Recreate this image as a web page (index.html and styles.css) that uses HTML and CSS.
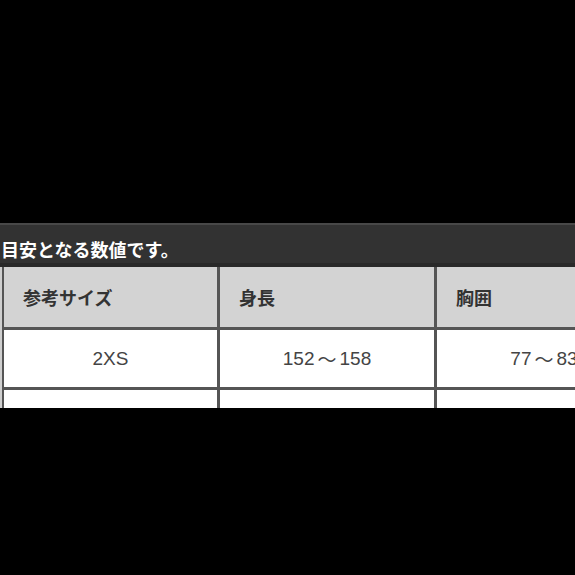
FILE: index.html
```html
<!DOCTYPE html>
<html lang="ja">
<head>
<meta charset="utf-8">
<title>サイズ表</title>
<link rel="stylesheet" href="styles.css">
</head>
<body>
<div class="page">
  <div class="top-space"></div>
  <div class="band">目安となる数値です。</div>
  <div class="table-wrap">
    <div class="grid">
      <div class="cell head">参考サイズ</div>
      <div class="cell head">身長</div>
      <div class="cell head">胸囲</div>
      <div class="cell data">2XS</div>
      <div class="cell data">152<span class="tilde">～</span>158</div>
      <div class="cell data">77<span class="tilde">～</span>83</div>
      <div class="cell data"></div>
      <div class="cell data"></div>
      <div class="cell data"></div>
    </div>
  </div>
</div>
</body>
</html>
```

FILE: styles.css
```css
html, body {
  margin: 0;
  padding: 0;
  background: #000;
}
.page {
  width: 575px;
  height: 575px;
  overflow: hidden;
  background: #000;
}
.top-space {
  height: 223px;
}
.band {
  box-sizing: border-box;
  height: 44px;
  background: #323232;
  border-top: 2px solid #484848;
  border-bottom: 4px solid #292929;
  padding: 15px 0 0 1px;
  color: #fff;
  font-family: "Noto Sans CJK JP", sans-serif;
  font-weight: 700;
  font-size: 18px;
  line-height: 18px;
  white-space: nowrap;
}
.table-wrap {
  width: 575px;
  height: 141px;
  overflow: hidden;
  background: #cfcfcf;
  padding-left: 2px;
  box-sizing: border-box;
}
.grid {
  display: grid;
  grid-template-columns: 213px 214px 214px;
  grid-template-rows: 60px 57px 30px;
  column-gap: 3px;
  row-gap: 3px;
  background: #555;
  padding-left: 2px;
  width: max-content;
}
.cell {
  display: flex;
  align-items: center;
}
.head {
  background: #d3d3d3;
  padding-left: 19px;
  color: #333;
  font-family: "Noto Sans CJK JP", sans-serif;
  font-weight: 700;
  font-size: 18px;
}
.data {
  background: #fff;
  justify-content: center;
  color: #444;
  font-family: "Liberation Sans", "Noto Sans CJK JP", sans-serif;
  font-size: 19px;
}
.tilde {
  padding: 0 3px;
}
```
